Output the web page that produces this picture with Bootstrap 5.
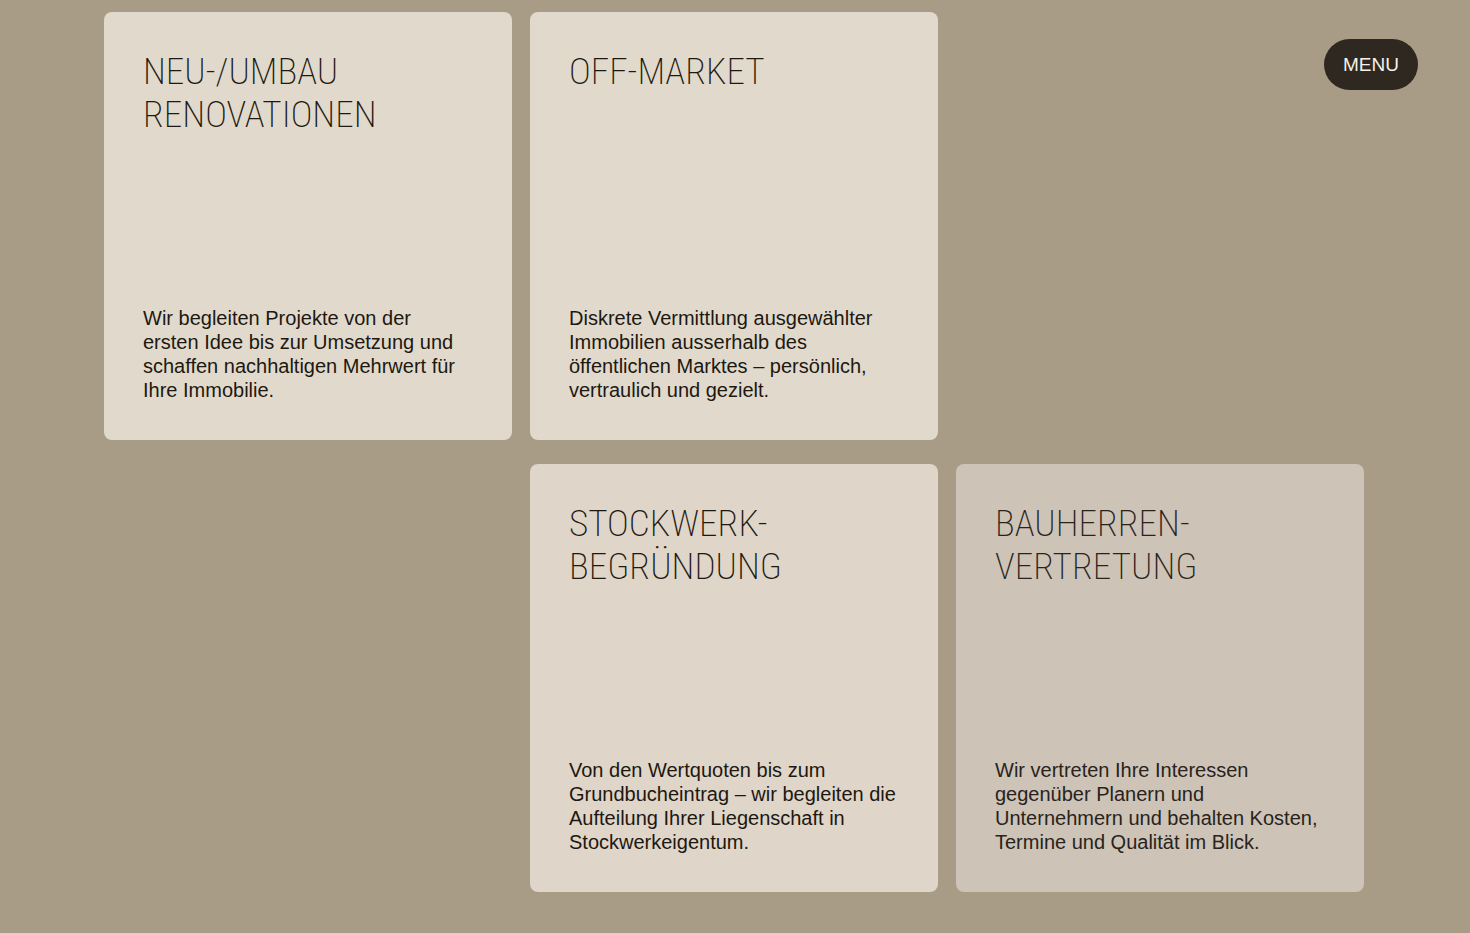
<!DOCTYPE html>
<html lang="de">
<head>
<meta charset="utf-8">
<meta name="viewport" content="width=device-width, initial-scale=1">
<title>Leistungen</title>
<link href="https://cdn.jsdelivr.net/npm/bootstrap@5.3.0/dist/css/bootstrap.min.css" rel="stylesheet">
<style>
  body {
    background: #a99c87;
    color: #1d1810;
    font-family: "Liberation Sans", Arial, sans-serif;
  }
  .services { padding: 12px 24px 40px; }
  .services .row { --bs-gutter-x: 18px; --bs-gutter-y: 24px; }
  .service {
    --bs-card-bg: #e1dacc;
    --bs-card-color: #1d1810;
    --bs-card-border-width: 0;
    --bs-card-border-radius: 8px;
    --bs-card-spacer-x: 39px;
    --bs-card-spacer-y: 38px;
    min-height: 428px;
  }
  .service-rose { --bs-card-bg: #dfd5c8; }
  .service-stone { --bs-card-bg: #cdc4b7; --bs-card-color: #29231c; }
  .service .card-title {
    font: 200 37px/43px "Roboto Condensed", "Liberation Sans", sans-serif;
  }
  .service .card-text { font-size: 20px; line-height: 24px; }
  .menu-btn {
    --bs-btn-bg: #2f2820;
    --bs-btn-color: #f6f1e8;
    --bs-btn-hover-bg: #453c31;
    --bs-btn-hover-color: #f6f1e8;
    --bs-btn-border-width: 0;
    --bs-btn-font-size: 19px;
    --bs-btn-line-height: 27px;
    --bs-btn-padding-x: 19px;
    --bs-btn-padding-y: 12px;
    top: 39px;
    right: 52px;
    z-index: 1030;
  }
  @media (min-width: 1200px) {
    .services { padding-left: 104px; padding-right: 106px; }
  }
</style>
</head>
<body>
<button type="button" class="btn menu-btn rounded-pill position-fixed">MENU</button>

<main class="container-fluid services">
  <div class="row">
    <div class="col-12 col-md-6 col-xl-4">
      <article class="card service h-100">
        <div class="card-body d-flex flex-column justify-content-between">
          <h2 class="card-title mb-0">NEU-/UMBAU<br>RENOVATIONEN</h2>
          <p class="card-text">Wir begleiten Projekte von der<br>ersten Idee bis zur Umsetzung und<br>schaffen nachhaltigen Mehrwert für<br>Ihre Immobilie.</p>
        </div>
      </article>
    </div>
    <div class="col-12 col-md-6 col-xl-4">
      <article class="card service h-100">
        <div class="card-body d-flex flex-column justify-content-between">
          <h2 class="card-title mb-0">OFF-MARKET</h2>
          <p class="card-text">Diskrete Vermittlung ausgewählter<br>Immobilien ausserhalb des<br>öffentlichen Marktes – persönlich,<br>vertraulich und gezielt.</p>
        </div>
      </article>
    </div>
    <div class="w-100 d-none d-xl-block mt-0"></div>
    <div class="col-12 col-md-6 col-xl-4 offset-xl-4">
      <article class="card service service-rose h-100">
        <div class="card-body d-flex flex-column justify-content-between">
          <h2 class="card-title mb-0">STOCKWERK-<br>BEGRÜNDUNG</h2>
          <p class="card-text">Von den Wertquoten bis zum<br>Grundbucheintrag – wir begleiten die<br>Aufteilung Ihrer Liegenschaft in<br>Stockwerkeigentum.</p>
        </div>
      </article>
    </div>
    <div class="col-12 col-md-6 col-xl-4">
      <article class="card service service-stone h-100">
        <div class="card-body d-flex flex-column justify-content-between">
          <h2 class="card-title mb-0">BAUHERREN-<br>VERTRETUNG</h2>
          <p class="card-text">Wir vertreten Ihre Interessen<br>gegenüber Planern und<br>Unternehmern und behalten Kosten,<br>Termine und Qualität im Blick.</p>
        </div>
      </article>
    </div>
  </div>
</main>
<script src="https://cdn.jsdelivr.net/npm/bootstrap@5.3.0/dist/js/bootstrap.bundle.min.js"></script>
</body>
</html>
